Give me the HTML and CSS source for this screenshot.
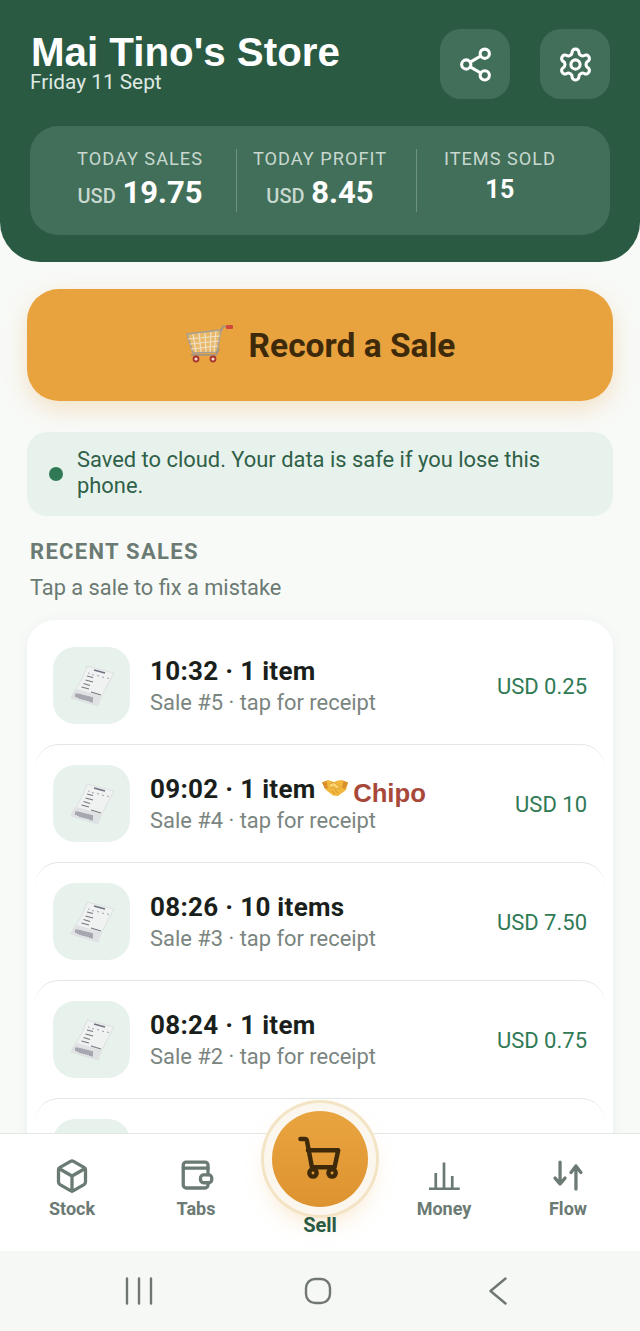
FILE: index.html
```html
<!DOCTYPE html>
<html lang="en">
<head>
<meta charset="utf-8">
<title>Mai Tino's Store</title>
<link rel="stylesheet" href="styles.css">
</head>
<body>
<svg class="defs" width="0" height="0" aria-hidden="true">
  <symbol id="receipt" viewBox="0 0 48 48">
    <path d="M19 4 46 11 C42 18 39 24 36 30 33 36 31 40 30 44 L3 36 C5 30 9 26 12 20 15 15 17 10 19 4Z" fill="#f0f1f1" stroke="#d2d4d6" stroke-width=".6"/>
    <path d="M3 36 C5 31 7 29 9 27 L33 34 C32 37 31 40 30 44Z" fill="#dfe1e3"/>
    <path d="M26 8 37 11" stroke="#6e7080" stroke-width="1.300"/>
    <path d="M20 11l1.500.4M24 12.500l2 .5M29 13.500l2 .5M34 15l2 .5M39 16l2 .5" stroke="#9a9da4" stroke-width=".9"/>
    <path d="M19 14 25 15.500M17.500 18 25 20M15.500 21.500 22 23.500M13.500 25 21 27M23 30 33 33" stroke="#75787f" stroke-width="1.100"/>
    <path d="M8 31.500 8 35M10 31.500 10 36M12 32 12 37M14 32.500 14 37.500M16 33 16 38M18 33.500 18 38.500M20 34 20 39M22 34.500 22 40M24 35 24 40.500" stroke="#777987" stroke-width="1.100"/>
  </symbol>
  <symbol id="cart-emoji" viewBox="0 0 48 40">
    <path d="M2 9 36 5 32 27 8 28Z" fill="#e9c07a" fill-opacity=".7" stroke="#a79f92" stroke-width="1.600"/>
    <path d="M8 9 11 27M14 8 16 27M20 8 21 27M26 7 25 27M31 6 29 27M3 14 35 11M5 19 34 16M6 24 33 21" stroke="#efe2c6" stroke-width="1.200"/>
    <path d="M36 6 38 1.500 43 1.500M34 24 31 30 6 30" fill="none" stroke="#9a938a" stroke-width="1.600"/>
    <rect x="41" y="0" width="7" height="4" rx="1" fill="#d3483c"/>
    <circle cx="11" cy="34" r="2.500" fill="#f4d9c0" stroke="#a8352f" stroke-width="1.800"/>
    <circle cx="28" cy="34" r="2.500" fill="#f4d9c0" stroke="#a8352f" stroke-width="1.800"/>
  </symbol>
  <symbol id="handshake" viewBox="0 0 26 18">
    <path d="M0 3.500 6 1 12 3 16 1.500 20 1 26 3.500 24 11 16 17 11 16.500 4 11Z" fill="#f2b63c"/>
    <path d="M0 3.500 4.500 2 6 9 3 10ZM26 3.500 21.500 2 20 9 23 10Z" fill="#d98f2c"/>
    <path d="M8 5 12 3.500 18 8 15 10 11 7.500 8 9" fill="#fbd56c" stroke="#c88a2a" stroke-width=".6"/>
    <path d="M10 12 13 15M13 11 16 14" stroke="#c88a2a" stroke-width=".8"/>
  </symbol>
</svg>

<div class="app">
  <main class="screen">
    <header class="header">
      <div class="top">
        <div class="brand">
          <h1 class="store">Mai Tino's Store</h1>
          <p class="date">Friday 11 Sept</p>
        </div>
        <div class="actions">
          <button class="action" aria-label="Share">
            <svg class="action-icon" viewBox="0 0 24 24"><circle cx="18" cy="5" r="3"/><circle cx="6" cy="12" r="3"/><circle cx="18" cy="19" r="3"/><path d="M8.600 13.500 15.400 17.500M15.400 6.500 8.600 10.500"/></svg>
          </button>
          <button class="action" aria-label="Settings">
            <svg class="action-icon" viewBox="0 0 24 24"><path d="M12.220 2h-.44a2 2 0 0 0-2 2v.18a2 2 0 0 1-1 1.730l-.43.25a2 2 0 0 1-2 0l-.15-.08a2 2 0 0 0-2.730.73l-.22.38a2 2 0 0 0 .73 2.730l.15.1a2 2 0 0 1 1 1.720v.51a2 2 0 0 1-1 1.740l-.15.09a2 2 0 0 0-.73 2.730l.22.38a2 2 0 0 0 2.730.73l.15-.08a2 2 0 0 1 2 0l.43.25a2 2 0 0 1 1 1.730V20a2 2 0 0 0 2 2h.44a2 2 0 0 0 2-2v-.18a2 2 0 0 1 1-1.730l.43-.25a2 2 0 0 1 2 0l.15.08a2 2 0 0 0 2.730-.73l.22-.39a2 2 0 0 0-.73-2.730l-.15-.08a2 2 0 0 1-1-1.740v-.5a2 2 0 0 1 1-1.740l.15-.09a2 2 0 0 0 .73-2.730l-.22-.38a2 2 0 0 0-2.730-.73l-.15.08a2 2 0 0 1-2 0l-.43-.25a2 2 0 0 1-1-1.730V4a2 2 0 0 0-2-2z"/><circle cx="12" cy="12" r="3"/></svg>
          </button>
        </div>
      </div>
      <section class="stats">
        <div class="stat">
          <div class="stat-label">TODAY SALES</div>
          <div class="stat-value"><span class="cur">USD</span> 19.75</div>
        </div>
        <div class="stat">
          <div class="stat-label">TODAY PROFIT</div>
          <div class="stat-value"><span class="cur">USD</span> 8.45</div>
        </div>
        <div class="stat">
          <div class="stat-label">ITEMS SOLD</div>
          <div class="stat-value stat-count">15</div>
        </div>
      </section>
    </header>

    <div class="content">
      <button class="record">
        <svg class="record-icon"><use href="#cart-emoji"/></svg>
        <span>Record a Sale</span>
      </button>

      <div class="saved">
        <span class="dot"></span>
        <p class="saved-text">Saved to cloud. Your data is safe if you lose this phone.</p>
      </div>

      <h2 class="section-title">RECENT SALES</h2>
      <p class="section-sub">Tap a sale to fix a mistake</p>

      <div class="list">
        <div class="row row-first">
          <div class="thumb"><svg class="thumb-icon"><use href="#receipt"/></svg></div>
          <div class="info">
            <div class="row-title">10:32 · 1 item</div>
            <div class="row-sub">Sale #5 · tap for receipt</div>
          </div>
          <div class="amount">USD 0.25</div>
        </div>
        <div class="row">
          <div class="thumb"><svg class="thumb-icon"><use href="#receipt"/></svg></div>
          <div class="info">
            <div class="row-title">09:02 · 1 item <svg class="shake"><use href="#handshake"/></svg> <span class="chipo">Chipo</span></div>
            <div class="row-sub">Sale #4 · tap for receipt</div>
          </div>
          <div class="amount">USD 10</div>
        </div>
        <div class="row">
          <div class="thumb"><svg class="thumb-icon"><use href="#receipt"/></svg></div>
          <div class="info">
            <div class="row-title">08:26 · 10 items</div>
            <div class="row-sub">Sale #3 · tap for receipt</div>
          </div>
          <div class="amount">USD 7.50</div>
        </div>
        <div class="row">
          <div class="thumb"><svg class="thumb-icon"><use href="#receipt"/></svg></div>
          <div class="info">
            <div class="row-title">08:24 · 1 item</div>
            <div class="row-sub">Sale #2 · tap for receipt</div>
          </div>
          <div class="amount">USD 0.75</div>
        </div>
        <div class="row">
          <div class="thumb"><svg class="thumb-icon"><use href="#receipt"/></svg></div>
          <div class="info">
            <div class="row-title">07:30 · 2 items</div>
            <div class="row-sub">Sale #1 · tap for receipt</div>
          </div>
          <div class="amount">USD 1.00</div>
        </div>
      </div>
    </div>
  </main>

  <nav class="nav">
    <div class="nav-item">
      <svg class="nav-icon" viewBox="0 0 24 24"><path d="M21 8a2 2 0 0 0-1-1.730l-7-4a2 2 0 0 0-2 0l-7 4A2 2 0 0 0 3 8v8a2 2 0 0 0 1 1.730l7 4a2 2 0 0 0 2 0l7-4A2 2 0 0 0 21 16Z"/><path d="M3.300 7 12 12l8.700-5M12 22V12"/></svg>
      <span class="nav-label">Stock</span>
    </div>
    <div class="nav-item">
      <svg class="nav-icon" viewBox="0 0 24 24"><path d="M20 11V4.700a2 2 0 0 0-2-2H5.500a2 2 0 0 0-2 2V18a2 2 0 0 0 2 2H18a2 2 0 0 0 2-2v-1.500"/><path d="M3.500 6.700H20"/><rect x="15" y="11.300" width="7.500" height="5.200" rx="2"/></svg>
      <span class="nav-label">Tabs</span>
    </div>
    <div class="nav-item nav-sell">
      <div class="fab">
        <svg class="fab-icon" viewBox="0 0 24 24"><path d="M1.800 1.600H4a1.200 1.200 0 0 1 1.200 1L7.800 16.300H19.600L21.500 7.400H5.700"/><circle cx="8.350" cy="19.300" r="1.900"/><circle cx="18.300" cy="19.300" r="1.900"/></svg>
      </div>
      <span class="sell-label">Sell</span>
    </div>
    <div class="nav-item">
      <svg class="nav-icon nav-thin" viewBox="0 0 24 24"><path d="M2 20.500h20.500M6.500 20V10M12 20V3M17.500 20V12"/></svg>
      <span class="nav-label">Money</span>
    </div>
    <div class="nav-item">
      <svg class="nav-icon" viewBox="0 0 24 24"><path d="M6.700 2.700V17.300M3.400 13.400 6.700 17.300 10 13.400M17.300 20.700V5.300M14 9.600 17.300 5.300 20.600 9.600"/></svg>
      <span class="nav-label">Flow</span>
    </div>
  </nav>

  <div class="system">
    <svg class="sys-icon" viewBox="0 0 28 28"><path d="M2 1.500v25M14 1.500v25M26 1.500v25"/></svg>
    <svg class="sys-icon" viewBox="0 0 28 28"><rect x="2" y="2" width="24" height="24" rx="9"/></svg>
    <svg class="sys-icon" viewBox="0 0 28 28"><path d="M22.500 1.500 7.500 14l15 12.500"/></svg>
  </div>
</div>
</body>
</html>
```
FILE: styles.css
```css
* { box-sizing: border-box; }
html, body { margin: 0; padding: 0; }
body { font-family: Roboto, "Liberation Sans", sans-serif; background: #f8faf8; }
button { font: inherit; border: 0; padding: 0; }
h1, h2, p { margin: 0; }
.defs { position: absolute; }

.app { width: 640px; height: 1331px; display: flex; flex-direction: column; overflow: hidden; position: relative; }
.screen { flex: 1 1 0; min-height: 0; overflow: hidden; }

.header { height: 262px; background: #2a5a42; border-radius: 0 0 40px 40px; padding: 29px 30px 0; }
.top { display: flex; justify-content: space-between; height: 70px; }
.brand { padding: 4px 0 0 1px; }
.store { font: 700 40.300px/40px "Liberation Sans", Arial, sans-serif; color: #fff; }
.date { font-size: 20.800px; line-height: 24px; color: #dfe9e3; margin: -3px 0 0 -1px; }
.actions { display: flex; gap: 30px; }
.action { width: 70px; height: 70px; border-radius: 21px; background: #426f59; display: flex; align-items: center; justify-content: center; }
.action-icon { width: 37px; height: 37px; fill: none; stroke: #fff; stroke-width: 2; stroke-linecap: round; stroke-linejoin: round; }

.stats { margin-top: 27px; height: 109px; border-radius: 28px; background: #426f59; padding: 0 20px; display: flex; align-items: center; }
.stat { width: 180px; height: 63px; position: relative; text-align: center; }
.stat:not(:last-child)::after { content: ""; position: absolute; right: -7px; top: 0; bottom: 0; width: 1px; background: #6e9280; }
.stat-label { font-size: 18.200px; line-height: 20px; letter-spacing: 1px; color: #c8d8cf; }
.stat-value { font-size: 31px; line-height: 36px; font-weight: 700; color: #fff; margin-top: 6px; }
.stat-count { font-size: 25px; line-height: 30px; margin-top: 6px; letter-spacing: .5px; }
.cur { font-size: 20px; font-weight: 500; color: #c8d8cf; margin-right: -1px; }

.content { padding: 27px 27px 0; }
.record { width: 586px; height: 112px; border-radius: 32px; background: #e8a33f; box-shadow: 0 8px 24px rgba(232, 163, 63, .28); display: flex; align-items: center; justify-content: center; gap: 16px; font-size: 33.500px; font-weight: 700; color: #3e2a0a; }
.record-icon { width: 48px; height: 40px; }

.saved { margin-top: 31px; height: 84px; border-radius: 20px; background: #e8f2ec; display: flex; align-items: center; padding: 0 22px; gap: 14px; }
.dot { flex: none; width: 14px; height: 14px; border-radius: 50%; background: #2f7a55; }
.saved-text { font-size: 21.900px; line-height: 26px; color: #2f6048; margin-top: -2px; }

.section-title { margin: 24px 0 0 3px; font-size: 22px; line-height: 24px; font-weight: 700; letter-spacing: 1.300px; color: #6b7a73; }
.section-sub { margin: 11px 0 0 3px; font-size: 21.800px; line-height: 26px; color: #6b7a73; }

.list { margin-top: 19px; background: #fff; border-radius: 28px; padding: 6px 8px 0; box-shadow: 0 2px 14px rgba(42, 90, 66, .06); }
.row { height: 118px; display: flex; align-items: center; padding: 0 18px; border-top: 1px solid #e3e7e5; border-radius: 24px; }
.row-first { border-top-color: transparent; }
.thumb { flex: none; width: 77px; height: 77px; border-radius: 22px; background: #e8f2ec; display: flex; align-items: center; justify-content: center; }
.thumb-icon { width: 48px; height: 48px; }
.info { flex: 1 1 auto; min-width: 0; padding: 2px 0 0 20px; }
.row-title { font-size: 26px; line-height: 30px; font-weight: 700; color: #1a1f1c; white-space: nowrap; letter-spacing: .3px; margin-top: -2px; }
.shake { width: 26px; height: 18px; vertical-align: 1px; }
.chipo { font: 700 25.700px/30px "Liberation Sans", Arial, sans-serif; color: #a8483a; letter-spacing: 0; position: relative; top: 4px; margin-left: -2px; }
.row-sub { font-size: 21.900px; line-height: 26px; color: #7a8580; margin-top: 4px; }
.amount { flex: none; font-size: 22px; line-height: 26px; color: #2f7a55; padding-top: 2px; }

.nav { flex: none; height: 118px; background: #fff; border-top: 1px solid #e3e8e5; display: flex; padding: 0 10px; position: relative; z-index: 2; }
.nav-item { width: 124px; display: flex; flex-direction: column; align-items: center; padding-top: 24px; }
.nav-icon { width: 36px; height: 36px; fill: none; stroke: #6b7a73; stroke-width: 2.200; stroke-linecap: round; stroke-linejoin: round; }
.nav-thin { stroke-width: 1.800; stroke-linecap: butt; }
.nav-label { font-size: 18px; line-height: 22px; font-weight: 700; color: #6b7a73; margin-top: 4px; }
.nav-sell { position: relative; padding-top: 0; }
.fab { position: absolute; top: -23px; left: 14px; width: 96px; height: 96px; border-radius: 50%; background: linear-gradient(180deg, #e9a440, #dd9330); box-shadow: 0 0 0 8px #fbf7ee, 0 0 0 11px #f4e4c6, 0 12px 26px rgba(232, 163, 63, .35); display: flex; align-items: center; justify-content: center; }
.fab-icon { width: 46px; height: 46px; fill: none; stroke: #3e2a0a; stroke-width: 2.300; stroke-linecap: round; stroke-linejoin: round; }
.sell-label { font-size: 20px; line-height: 24px; font-weight: 700; color: #2a5a42; margin-top: 79px; position: relative; }

.system { flex: none; height: 80px; background: #f6f8f6; display: flex; align-items: center; padding-left: 125px; gap: 151px; }
.sys-icon { width: 28px; height: 28px; fill: none; stroke: #707773; stroke-width: 2.400; stroke-linecap: round; stroke-linejoin: round; }
```
